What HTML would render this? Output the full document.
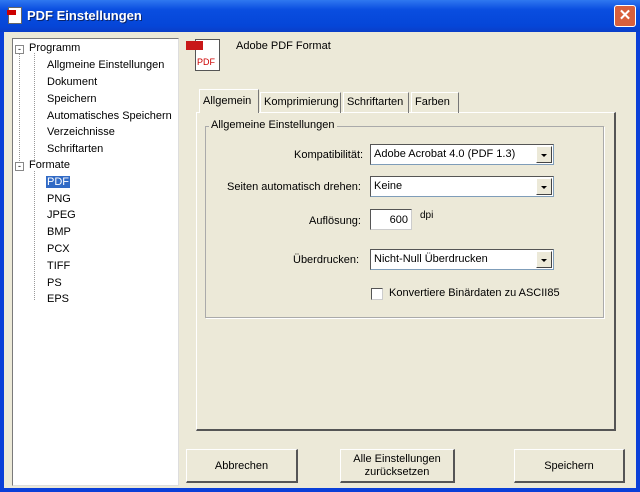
<!DOCTYPE html>
<html><head><style>
*{margin:0;padding:0;box-sizing:border-box}
body{width:640px;height:492px;overflow:hidden;background:#0a3fd8;font-family:"Liberation Sans",sans-serif;font-size:11px;color:#000;position:relative}
.abs{position:absolute}
#title{left:0;top:0;width:640px;height:32px;background:linear-gradient(#2f78f0,#0a4ee0 30%,#0546d8 80%,#0a3ec8);}
#body{left:4px;top:32px;width:632px;height:456px;background:#ece9d8}
.t{position:absolute;white-space:nowrap}
#tree{left:12px;top:38px;width:167px;height:448px;background:#fff;border:1px solid #7a7a7a;border-right-color:#ddd;border-bottom-color:#ddd}
.combo{position:absolute;left:370px;width:184px;height:21px;background:#fff;border:1px solid #7f9db9;border-top-color:#555;border-left-color:#555}
.combo span{position:absolute;left:3px;top:3px}
.combo b{position:absolute;right:1px;top:1px;width:16px;height:17px;background:#ece9d8;border:1px solid #fff;border-right-color:#444;border-bottom-color:#444}
.combo b:after{content:"";position:absolute;left:4px;top:7px;border-left:3px solid transparent;border-right:3px solid transparent;border-top:3px solid #000}
.btn{position:absolute;top:449px;height:34px;background:#ece9d8;border:1px solid #fff;border-right:2px solid #555;border-bottom:2px solid #555;text-align:center;font-size:11px}
.tab{position:absolute;top:92px;height:21px;border:1px solid #fff;border-right-color:#777;border-bottom:none;padding:3px 3px 0}
</style></head><body>
<div id="title" class="abs"></div>
<div class="abs" style="left:8px;top:7px;width:14px;height:17px;background:#fff;border:1px solid #666"><div style="position:absolute;left:-2px;top:2px;width:9px;height:5px;background:#c00"></div></div>
<div class="t" style="left:27px;top:8px;color:#fff;font-weight:bold;font-size:13px;text-shadow:1px 1px #0a246a">PDF Einstellungen</div>
<div class="abs" style="left:614px;top:5px;width:22px;height:22px;background:#d8603c;border:1px solid #fff;border-radius:3px;color:#fff;font-weight:bold;font-size:15px;text-align:center;line-height:19px">✕</div>
<div id="body" class="abs"></div>
<div id="tree" class="abs">
<div style="position:absolute;left:6px;top:12px;height:120px;border-left:1px dotted #999"></div>
<div style="position:absolute;left:21px;top:14px;height:109px;border-left:1px dotted #999"></div>
<div style="position:absolute;left:21px;top:132px;height:129px;border-left:1px dotted #999"></div>
<div class="t" style="left:2px;top:6px;width:9px;height:9px;border:1px solid #888;background:#fff;font-size:9px;line-height:6px;text-align:center">-</div>
<div class="t" style="left:2px;top:123px;width:9px;height:9px;border:1px solid #888;background:#fff;font-size:9px;line-height:6px;text-align:center">-</div>
<div class="t" style="left:16px;top:3px">Programm</div>
<div class="t" style="left:34px;top:20px">Allgmeine Einstellungen</div>
<div class="t" style="left:34px;top:37px">Dokument</div>
<div class="t" style="left:34px;top:54px">Speichern</div>
<div class="t" style="left:34px;top:71px">Automatisches Speichern</div>
<div class="t" style="left:34px;top:87px">Verzeichnisse</div>
<div class="t" style="left:34px;top:104px">Schriftarten</div>
<div class="t" style="left:16px;top:120px">Formate</div>
<div class="t" style="left:33px;top:137px;background:#316ac5;color:#fff;padding:0 1px">PDF</div>
<div class="t" style="left:34px;top:154px">PNG</div>
<div class="t" style="left:34px;top:170px">JPEG</div>
<div class="t" style="left:34px;top:187px">BMP</div>
<div class="t" style="left:34px;top:204px">PCX</div>
<div class="t" style="left:34px;top:221px">TIFF</div>
<div class="t" style="left:34px;top:238px">PS</div>
<div class="t" style="left:34px;top:254px">EPS</div>
</div>
<div class="abs" style="left:195px;top:39px;width:25px;height:32px;background:#fff;border:1px solid #555"><div class="t" style="left:1px;top:17px;color:#c00;font-size:9px">PDF</div></div>
<div class="abs" style="left:186px;top:41px;width:17px;height:9px;background:#c81818"></div>
<div class="t" style="left:236px;top:40px">Adobe PDF Format</div>
<div class="abs" style="left:196px;top:112px;width:420px;height:319px;border:1px solid #fff;border-right:2px solid #555;border-bottom:2px solid #555"></div>
<div class="tab" style="left:199px;top:89px;height:24px;background:#ece9d8;border-bottom:none;width:60px;padding-top:5px">Allgemein</div>
<div class="tab" style="left:260px;width:81px">Komprimierung</div>
<div class="tab" style="left:343px;width:66px">Schriftarten</div>
<div class="tab" style="left:411px;width:48px">Farben</div>
<div class="abs" style="left:205px;top:126px;width:399px;height:192px;border:1px solid #aaa;box-shadow:1px 1px 0 #fff"></div>
<div class="t" style="left:209px;top:119px;background:#ece9d8;padding:0 2px">Allgemeine Einstellungen</div>
<div class="t" style="left:294px;top:149px">Kompatibilität:</div>
<div class="combo" style="top:144px"><span>Adobe Acrobat 4.0 (PDF 1.3)</span><b></b></div>
<div class="t" style="left:227px;top:181px">Seiten automatisch drehen:</div>
<div class="combo" style="top:176px"><span>Keine</span><b></b></div>
<div class="t" style="left:309px;top:215px">Auflösung:</div>
<div class="abs" style="left:370px;top:209px;width:42px;height:21px;background:#fff;border:1px solid #ccc;border-top-color:#555;border-left-color:#555"><span class="t" style="right:3px;top:4px">600</span></div>
<div class="t" style="left:420px;top:210px;font-size:10px">dpi</div>
<div class="t" style="left:293px;top:254px">Überdrucken:</div>
<div class="combo" style="top:249px"><span>Nicht-Null Überdrucken</span><b></b></div>
<div class="abs" style="left:371px;top:288px;width:12px;height:12px;background:#fff;border:1px solid #555;border-right-color:#ccc;border-bottom-color:#ccc"></div>
<div class="t" style="left:389px;top:287px">Konvertiere Binärdaten zu ASCII85</div>
<div class="btn" style="left:186px;width:112px;padding-top:10px">Abbrechen</div>
<div class="btn" style="left:340px;width:115px;padding-top:3px;line-height:13px">Alle Einstellungen<br>zurücksetzen</div>
<div class="btn" style="left:514px;width:111px;padding-top:10px">Speichern</div>
</body></html>
